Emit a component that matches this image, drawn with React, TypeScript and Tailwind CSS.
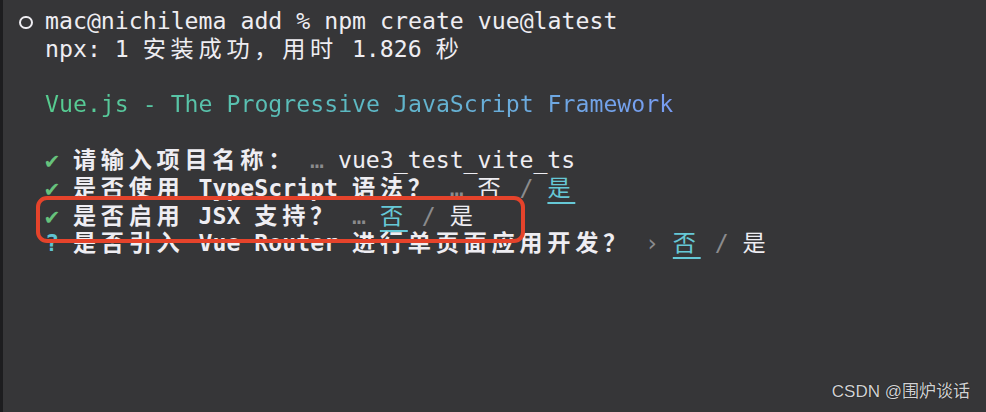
import React from "react";

// splits a string into CJK (double-width cells) and plain runs
function T({ s, className = "" }: { s: string; className?: string }) {
  const parts = s.split(/([\u3000-\u303f\u4e00-\u9fff\uff00-\uffef]+)/);
  return (
    <span className={className}>
      {parts.map((p, i) =>
        i % 2 === 1 ? (
          <span key={i} className="tracking-[4.7px]">
            {p}
          </span>
        ) : (
          <span key={i}>{p}</span>
        )
      )}
    </span>
  );
}

function Line({ children }: { children?: React.ReactNode }) {
  return <div className="h-[27.8px] whitespace-pre leading-[27.8px]">{children}</div>;
}

function Opt({ s, on }: { s: string; on?: boolean }) {
  return on ? (
    <span className="font-normal text-[#66c8d6] underline decoration-2 underline-offset-[6px] tracking-[4.7px]">
      {s}
    </span>
  ) : (
    <span className="font-normal text-[#eeedf2] tracking-[4.7px]">{s}</span>
  );
}

const Slash = () => <span className="font-normal text-[#8b8b8d]">/</span>;

export default function App() {
  return (
    <div className="relative h-[412px] w-[986px] overflow-hidden border-l-[3px] border-[#1d1d1f] bg-[#363638] font-['DejaVu_Sans_Mono','Noto_Sans_CJK_SC',monospace] text-[23.2px] text-[#eeedf2]">
      <div className="flex flex-col pl-[42px] pt-[7px]">
        <div className="relative">
          <span className="absolute left-[-26px] top-[9px] h-[13px] w-[14px] rounded-full border-[2.5px] border-[#eeedf2]" />
          <Line>mac@nichilema add % npm create vue@latest</Line>
        </div>
        <Line>
          <T s="npx: 1 安装成功，用时 1.826 秒" />
        </Line>
        <Line />
        <Line>
          <span className="bg-linear-to-r from-[#56cc8e] via-[#5cb9c4] to-[#789cf4] bg-clip-text text-transparent">
            Vue.js - The Progressive JavaScript Framework
          </span>
        </Line>
        <Line />
        <Line>
          <span className="font-bold">
            <span className="text-[#66c27c]">✔</span> <T s="请输入项目名称：" /> <span className="font-normal text-[#8b8b8d]">…</span>{" "}
            <span className="font-normal">vue3_test_vite_ts</span>
          </span>
        </Line>
        <Line>
          <span className="font-bold">
            <span className="text-[#66c27c]">✔</span> <T s="是否使用 TypeScript 语法？" /> <span className="font-normal text-[#8b8b8d]">…</span>{" "}
            <Opt s="否" /> <Slash /> <Opt s="是" on />
          </span>
        </Line>
        <Line>
          <span className="font-bold">
            <span className="text-[#66c27c]">✔</span> <T s="是否启用 JSX 支持？" /> <span className="font-normal text-[#8b8b8d]">…</span>{" "}
            <Opt s="否" on /> <Slash /> <Opt s="是" />
          </span>
        </Line>
        <Line>
          <span className="font-bold">
            <span className="text-[#5fc3d2]">?</span> <T s="是否引入 Vue Router 进行单页面应用开发？" />{" "}
            <span className="font-normal text-[#8b8b8d]">›</span> <Opt s="否" on /> <Slash /> <Opt s="是" />
          </span>
        </Line>
      </div>

      {/* annotation box */}
      <div className="absolute left-[33px] top-[196px] h-[47px] w-[489px] rounded-[11px] border-[4px] border-[#e5432b]" />

      {/* watermark */}
      <div className="absolute right-[16px] bottom-[8px] font-['Liberation_Sans','Noto_Sans_CJK_SC',sans-serif] text-[17px] text-[#d2d2d4] [text-shadow:0_0_1px_#000]">
        CSDN @围炉谈话
      </div>
    </div>
  );
}
